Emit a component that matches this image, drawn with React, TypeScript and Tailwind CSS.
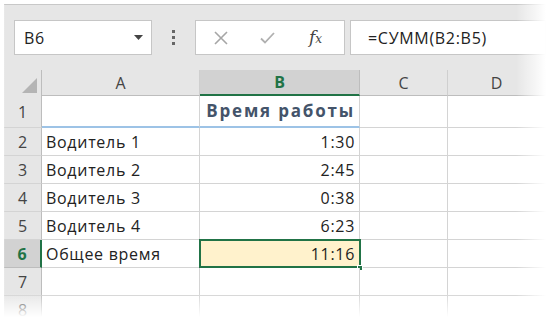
import React from "react";

const cols = [
  { label: "A", w: "w-[158px]" },
  { label: "B", w: "w-[160px]" },
  { label: "C", w: "w-[88px]" },
  { label: "D", w: "flex-1" },
];

const rows = [
  { n: "1", a: "", b: "Время работы", h: "h-[32px]" },
  { n: "2", a: "Водитель 1", b: "1:30", h: "h-[28px]" },
  { n: "3", a: "Водитель 2", b: "2:45", h: "h-[28px]" },
  { n: "4", a: "Водитель 3", b: "0:38", h: "h-[28px]" },
  { n: "5", a: "Водитель 4", b: "6:23", h: "h-[28px]" },
  { n: "6", a: "Общее время", b: "11:16", h: "h-[28px]" },
  { n: "7", a: "", b: "", h: "h-[28px]" },
  { n: "8", a: "", b: "", h: "h-[28px]" },
];

export default function App() {
  return (
    <div className="relative w-[546px] h-[317px] bg-white overflow-hidden font-['Open_Sans',sans-serif] text-[#222]">
      <div className="ml-[4px] mt-[4px] border-t border-[#c8c8c8] bg-[#e6e6e6]">
        {/* formula bar */}
        <div className="h-[65px] flex items-center pl-[10px]">
          <div className="w-[138px] h-[35px] bg-white border border-[#c6c6c6] flex items-center justify-between pl-[9px] pr-[8px]">
            <span className="text-[16px] tracking-[0.7px]">B6</span>
            <svg width="9" height="5" viewBox="0 0 9 5">
              <path d="M0 0h9L4.5 5z" fill="#444" />
            </svg>
          </div>
          <div className="w-[43px] flex flex-col items-center gap-[3px]">
            <div className="w-[3px] h-[3px] bg-[#666]" />
            <div className="w-[3px] h-[3px] bg-[#666]" />
            <div className="w-[3px] h-[3px] bg-[#666]" />
          </div>
          <div className="w-[150px] h-[35px] bg-white border border-[#c6c6c6] flex items-center">
            <svg className="ml-[18px]" width="14" height="14" viewBox="0 0 14 14">
              <path d="M1 1l12 12M13 1L1 13" stroke="#a6a6a6" strokeWidth="1.6" />
            </svg>
            <svg className="ml-[32px]" width="15" height="12" viewBox="0 0 15 12">
              <path d="M1 6.5l4 4L14 1" stroke="#b0b0b0" strokeWidth="1.8" fill="none" />
            </svg>
            <span className="ml-[34px] font-['DejaVu_Serif',serif] italic text-[17px] text-[#444]">
              f<span className="text-[12px]">x</span>
            </span>
          </div>
          <div className="ml-[5px] flex-1 h-[35px] bg-white border border-[#c6c6c6] flex items-center pl-[17px] text-[16px] tracking-[0.7px]">
            =СУММ(B2:B5)
          </div>
        </div>

        {/* column headers */}
        <div className="flex h-[26px]">
          <div className="w-[38px] border-r border-[#bdbdbd] flex items-end justify-end pr-[4px] pb-[3px]">
            <svg width="15" height="15" viewBox="0 0 15 15">
              <path d="M15 0V15H0z" fill="#b4b4b4" />
            </svg>
          </div>
          {cols.map((c) =>
            c.label === "B" ? (
              <div
                key={c.label}
                className={`${c.w} bg-[#d2d2d2] border-r border-[#bdbdbd] border-b-2 border-b-[#217346] flex items-center justify-center text-[16px] font-bold text-[#217346]`}
              >
                {c.label}
              </div>
            ) : (
              <div
                key={c.label}
                className={`${c.w} border-r border-[#cfcfcf] border-b border-b-[#bdbdbd] flex items-center justify-center text-[16px] text-[#444]`}
              >
                {c.label}
              </div>
            )
          )}
        </div>

        {/* rows */}
        {rows.map((r) => {
          const sel = r.n === "6";
          const title = r.n === "1";
          return (
            <div key={r.n} className={`flex ${r.h}`}>
              <div
                className={`w-[38px] flex items-center justify-center text-[16px] border-b ${
                  sel
                    ? "bg-[#d2d2d2] border-b-[#bdbdbd] border-r-2 border-r-[#217346] font-bold text-[#217346]"
                    : "border-b-[#d4d4d4] border-r border-r-[#bdbdbd] text-[#444]"
                }`}
              >
                {r.n}
              </div>
              <div
                className={`w-[158px] bg-white border-r border-[#d4d4d4] flex items-center pl-[4px] text-[16px] tracking-[0.7px] ${
                  title ? "border-b-2 border-b-[#9dc3e6]" : "border-b"
                }`}
              >
                {r.a}
              </div>
              <div
                className={`relative w-[160px] border-r border-[#d4d4d4] flex items-center justify-end pr-[4px] ${
                  title
                    ? "bg-white border-b-2 border-b-[#9dc3e6] text-[17px] tracking-[1.8px] font-bold text-[#44546a]"
                    : sel
                    ? "bg-[#fff2cc] border-b text-[16px] tracking-[0.7px]"
                    : "bg-white border-b text-[16px] tracking-[0.7px]"
                }`}
              >
                {r.b}
                {sel && (
                  <>
                    <div className="absolute -left-[1px] -top-[1px] -right-[2px] -bottom-[1px] border-2 border-[#217346]" />
                    <div className="absolute -right-[4px] -bottom-[4px] w-[6px] h-[6px] bg-[#217346] border border-white" />
                  </>
                )}
              </div>
              <div className="w-[88px] bg-white border-r border-b border-[#d4d4d4]" />
              <div className="flex-1 bg-white border-b border-[#d4d4d4]" />
            </div>
          );
        })}
      </div>

      {/* photo edge fades */}
      <div className="absolute top-0 right-0 h-full w-[30px] bg-gradient-to-r from-white/0 to-white" />
      <div className="absolute bottom-0 left-0 w-full h-[24px] bg-gradient-to-b from-white/0 to-white" />
      <div className="absolute top-0 left-0 h-full w-[5px] bg-gradient-to-l from-white/0 to-white" />
    </div>
  );
}
